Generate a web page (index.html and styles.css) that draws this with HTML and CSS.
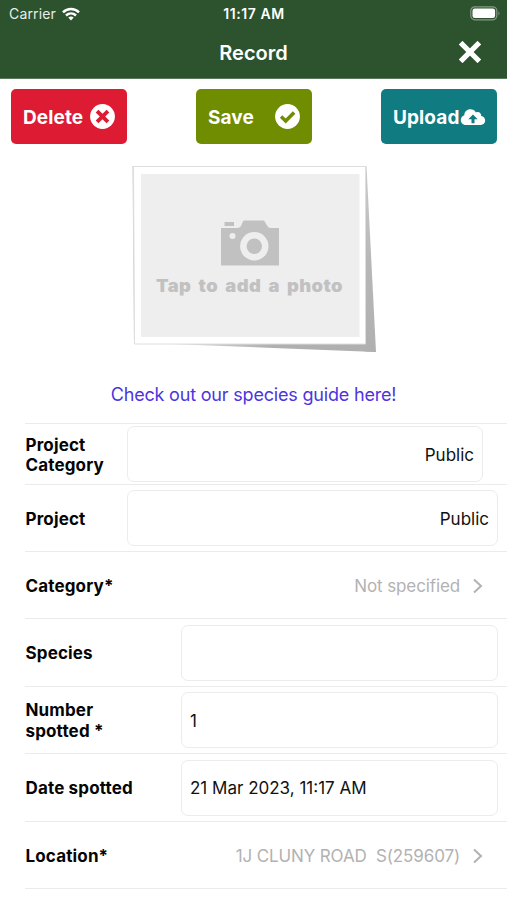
FILE: index.html
```html
<!DOCTYPE html>
<html lang="en">
<head>
<meta charset="utf-8">
<title>Record</title>
<link rel="stylesheet" href="styles.css">
</head>
<body>
<header class="header">
  <div class="status">
    <div class="carrier"><span>Carrier</span>
      <svg class="wifi" viewBox="0 0 18 14" width="18" height="14"><g fill="none" stroke="#fff" stroke-width="2.5"><path d="M1 5.300C5.500.8 12.500.8 17 5.300"/><path d="M4 8.500C7 5.700 11 5.700 14 8.500"/></g><path d="M6.300 10.500Q9 8.500 11.700 10.500L9 13.400Z" fill="#fff"/></svg>
    </div>
    <span class="clock">11:17 AM</span>
    <svg class="battery" viewBox="0 0 31 15" width="31" height="15"><rect x=".8" y=".8" width="26" height="13" rx="4" fill="none" stroke="#839b84" stroke-width="1.200"/><rect x="2.500" y="2.500" width="22.600" height="9.600" rx="2.300" fill="#fff"/><path d="M28.500 5q2 2.300 0 4.600z" fill="#839b84"/></svg>
  </div>
  <div class="nav">
    <h1>Record</h1>
    <svg class="close" viewBox="0 0 22 22" width="22" height="22"><path d="M3.500 3.500L18.500 18.500M18.500 3.500L3.500 18.500" stroke="#fff" stroke-width="5.200" stroke-linecap="square"/></svg>
  </div>
</header>
<div class="actions">
  <button class="btn delete"><span>Delete</span>
    <svg viewBox="0 0 26 26" width="26" height="26"><circle cx="12.500" cy="12.500" r="12.400" fill="#fff"/><path d="M8.400 8.400l8.200 8.200M16.600 8.400l-8.200 8.200" stroke="#dd1b33" stroke-width="3.800" stroke-linecap="square"/></svg></button>
  <button class="btn save"><span>Save</span>
    <svg viewBox="0 0 26 26" width="26" height="26"><circle cx="12.500" cy="12.500" r="12.400" fill="#fff"/><path d="M6.100 12.500l4.600 4.500 8.400-8.500" fill="none" stroke="#708c00" stroke-width="3.500"/></svg></button>
  <button class="btn upload"><span>Upload</span>
    <svg viewBox="0 0 26 26" width="26" height="26"><path d="M6 21C2.800 21 .8 18.700.8 16c0-2.300 1.400-4.100 3.500-4.800C4.300 7.700 7 5.200 10.300 5.200c2.500 0 4.500 1.200 5.600 3.200 2.800-1.300 5.600.6 5.300 3.700 2.400.4 4 2.200 4 4.500 0 2.500-2 4.400-4.500 4.400z" fill="#fff"/><path d="M13 10.600l-4.700 4.700h3.200v4h3v-4h3.200z" fill="#107b80"/></svg></button>
</div>
<div class="photo">
  <svg viewBox="0 0 246 190" width="246" height="190">
    <defs>
      <linearGradient id="shade" x1="0" y1="0" x2="0" y2="1"><stop offset="0" stop-color="#ccc"/><stop offset=".5" stop-color="#b8b8b8"/><stop offset="1" stop-color="#b0b0b0"/></linearGradient>
      <linearGradient id="under" x1="0" y1="0" x2="1" y2="0"><stop offset="0" stop-color="#ddd"/><stop offset=".5" stop-color="#b0b0b0"/><stop offset="1" stop-color="#b0b0b0"/></linearGradient>
    </defs>
    <path d="M2.500 3L4 180H6V3Z" fill="#c8c8c8"/>
    <path d="M235 3H236.500L246 189L235 188.500Z" fill="url(#shade)"/>
    <path d="M40 181L246 189L236 170Z" fill="url(#under)"/>
    <path d="M3.500 3.500H235.500V181H4.500Z" fill="#fff" stroke="#dedede"/>
    <rect x="11" y="11" width="218.500" height="163" fill="#eee"/>
    <g fill="#c1c1c1"><path d="M91 65H108Q111 64.500 112 60.500L113.500 57.500H134L137 62.500Q138 65 141 65H149V102.500H91Z"/><rect x="94.500" y="59" width="9.500" height="4"/></g>
    <circle cx="102.500" cy="73" r="3" fill="#eee"/><circle cx="124.300" cy="83.300" r="14.200" fill="#eee"/><circle cx="124.300" cy="83.300" r="7.700" fill="#c1c1c1"/>
    <text class="tap" x="26" y="128.500" textLength="187" lengthAdjust="spacingAndGlyphs">Tap to add a photo</text>
  </svg>
</div>
<a class="guide"><span>Check out our species guide here!</span></a>
<main class="form">
  <div class="row first"><label>Project<br>Category</label><div class="field right inset">Public</div></div>
  <div class="row"><label>Project</label><div class="field right">Public</div></div>
  <div class="row"><label>Category*</label><div class="pick"><span>Not specified</span><svg viewBox="0 0 10 16" width="10" height="16"><path d="M1 1.500L8 8l-7 6.500"/></svg></div></div>
  <div class="row narrow tall"><label>Species</label><div class="field"></div></div>
  <div class="row narrow"><label>Number<br>spotted *</label><div class="field">1</div></div>
  <div class="row narrow tall"><label>Date spotted</label><div class="field"><span>21 Mar 2023, 11:17 AM</span></div></div>
  <div class="row last"><label>Location*</label><div class="pick"><span>1J CLUNY ROAD&nbsp; S(259607)</span><svg viewBox="0 0 10 16" width="10" height="16"><path d="M1 1.500L8 8l-7 6.500"/></svg></div></div>
</main>
</body>
</html>
```
FILE: styles.css
```css
* { box-sizing: border-box; }
body { margin: 0; width: 507px; height: 900px; overflow: hidden; background: #fff; color: #111; font-family: Inter, "Liberation Sans", sans-serif; }
svg { display: block; flex: none; }
.header { height: 79px; background: #2c522e; color: #fff; border-bottom: 1px solid #5b7a5d; }
.status { display: grid; grid-template-columns: 1fr auto 1fr; align-items: center; height: 27px; padding: 0 6px 0 9px; }
.carrier { display: flex; align-items: center; gap: 6px; font-size: 14px; letter-spacing: .15px; color: #e8eee8; }
.clock { font-size: 14px; font-weight: 600; letter-spacing: .6px; margin-right: 2px; }
.battery { justify-self: end; }
.nav { display: grid; grid-template-columns: 1fr auto 1fr; align-items: center; height: 50px; padding-right: 26px; padding-left: 26px; }
h1 { grid-column: 2; margin: 1px 0 0; font-size: 20px; font-weight: 600; letter-spacing: 0; }
.close { justify-self: end; }
.actions { display: flex; justify-content: space-between; padding: 10px 10px 0 11px; }
.btn { display: flex; align-items: center; justify-content: space-between; width: 116px; height: 55px; padding: 0 11px 0 12px; border: 0; border-radius: 5px; color: #fff; font: 700 19px Inter, sans-serif; letter-spacing: .1px; }
.btn span { padding-top: 1px; white-space: nowrap; }
.delete { background: #dd1b33; }
.save { background: #708c00; }
.upload { background: #107b80; }
.photo { display: flex; padding: 19px 0 0 130px; }
.tap { font: 900 17.500px Inter, sans-serif; word-spacing: 3px; letter-spacing: .4px; fill: #c1c1c1; }
.guide { display: flex; justify-content: center; align-items: center; height: 40px; margin-top: 22px; padding-bottom: 1px; color: #4c35e0; font-size: 18px; letter-spacing: -.19px; }
.form { margin: 8px 0 0 25px; }
.row { display: flex; align-items: center; height: 67px; padding-right: 9px; border-top: 1px solid #ebebeb; }
.row.first { height: 61px; }
.row.tall { height: 68px; }
.row.last { height: 68px; border-bottom: 1px solid #ebebeb; }
label { width: 102px; flex: none; padding: 2px 0 0 .5px; font-size: 17px; line-height: 20.500px; font-weight: 700; letter-spacing: .15px; color: #050505; }
.narrow label { width: 156px; padding-top: 1px; }
.field { display: flex; align-items: center; flex: 1; height: 56px; padding: 1px 8px 0; border: 1px solid #ececec; border-radius: 7px; font-size: 17px; letter-spacing: 0; }
.right { justify-content: flex-end; }
.inset { margin-right: 15px; }
.pick { display: flex; align-items: center; justify-content: flex-end; flex: 1; gap: 13px; padding: 1px 15px 0 0; color: #b2b2b2; font-size: 17px; letter-spacing: -.12px; }
.pick path { fill: none; stroke: #b2b2b2; stroke-width: 2; }
```
